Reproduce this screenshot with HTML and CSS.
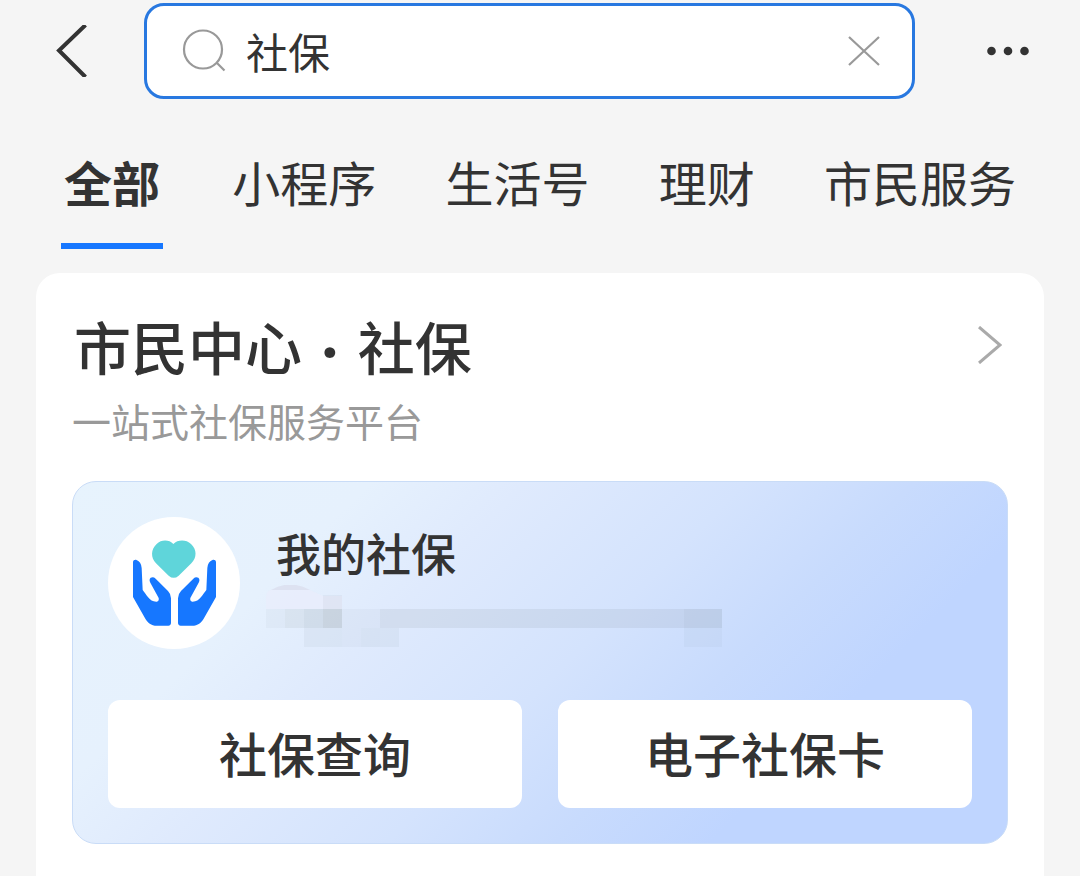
FILE: index.html
```html
<!DOCTYPE html>
<html lang="zh-CN">
<head>
<meta charset="utf-8">
<meta name="viewport" content="width=device-width, initial-scale=1">
<title>社保</title>
<link rel="stylesheet" href="styles.css">
</head>
<body>
<div class="page">
  <header class="topbar">
    <button class="icon-button back" type="button" aria-label="返回">
      <svg width="32" height="52" viewBox="0 0 32 52"><path d="M29.500 0 3 25.500 29.500 52" fill="none" stroke="#333" stroke-width="4"/></svg>
    </button>
    <form class="search" role="search">
      <svg class="search-icon" width="44" height="44" viewBox="0 0 44 44" fill="none" stroke="#999" stroke-width="2.200"><circle cx="21" cy="20.500" r="19"/><path d="M35 34 42.500 41.500"/></svg>
      <input class="search-input" type="text" value="社保" aria-label="搜索">
      <button class="icon-button" type="button" aria-label="清除">
        <svg width="32" height="30" viewBox="0 0 32 30"><path d="M1 1 31 29M31 1 1 29" fill="none" stroke="#999" stroke-width="2.200"/></svg>
      </button>
    </form>
    <button class="icon-button more" type="button" aria-label="更多">
      <svg width="42" height="10" viewBox="0 0 42 10" fill="#333"><circle cx="4.500" cy="5" r="4.300"/><circle cx="21" cy="5" r="4.300"/><circle cx="37.500" cy="5" r="4.300"/></svg>
    </button>
  </header>

  <nav class="tabs">
    <a class="tab tab-active" href="#all" aria-current="page">全部</a>
    <a class="tab" href="#mini">小程序</a>
    <a class="tab" href="#life">生活号</a>
    <a class="tab" href="#money">理财</a>
    <a class="tab" href="#civic">市民服务</a>
  </nav>

  <main class="card">
    <a class="card-head" href="#center">
      <h1 class="title">市民中心 <span class="dot">·</span> 社保</h1>
      <svg width="24" height="38" viewBox="0 0 24 38"><path d="M1 1 22 19 1 37" fill="none" stroke="#aaa" stroke-width="3"/></svg>
    </a>
    <p class="subtitle">一站式社保服务平台</p>

    <section class="panel">
      <div class="profile">
        <svg class="logo" width="132" height="132" viewBox="54 51 396 396">
          <circle cx="252" cy="249" r="198" fill="#fff"/>
          <path fill="#5fd5da" d="M250 132C238 119 214 118 200 132C182 148 182 173 198 190L236 227Q251 240 266 227L304 190C321 173 321 148 303 132C288 118 263 119 250 132Z"/>
          <g fill="#1677ff">
            <path id="hand" d="M129 185Q130 178 138 179Q154 185 155 204L158 270C169 282 178 306 200 305Q208 303 206 294L181 248Q176 239 182 233Q190 229 197 236L234 273Q243 282 243 295V368Q243 376 235 377H204C183 378 174 368 166 356L129 291Z"/>
            <use href="#hand" transform="matrix(-1 0 0 1 507 0)"/>
          </g>
        </svg>
        <div class="profile-text">
          <h2 class="name">我的社保</h2>
          <svg class="mask" width="456" height="62" viewBox="0 0 456 62" aria-hidden="true">
            <path d="M5 5Q24-6 44 5Z" fill="#dde2f1"/>
            <path d="M0 24V14Q0 5 5 5H44L57 11H76V24Z" fill="#e9edfb" opacity=".7"/>
            <g fill="#56645f">
              <path opacity=".05" d="M57 10H76V24H57ZM38 43H76V62H38Z"/>
              <path opacity=".04" d="M0 24H19V43H0ZM76 24H114V43H76ZM76 43H95V62H76Z"/>
              <path opacity=".080" d="M19 24H38V43H19Z"/>
              <path opacity=".060" d="M95 43H114V62H95Z"/>
              <path opacity=".120" d="M38 24H57V43H38Z"/>
              <path opacity=".180" d="M57 24H76V43H57Z"/>
              <path opacity=".050" d="M114 43H133V62H114Z"/>
              <path opacity=".090" d="M114 24H456V43H114Z"/>
              <path opacity=".040" d="M418 24H456V43H418Z"/>
              <path opacity=".040" d="M418 43H456V62H418Z"/>
            </g>
          </svg>
        </div>
      </div>
      <div class="actions">
        <button class="action" type="button">社保查询</button>
        <button class="action" type="button">电子社保卡</button>
      </div>
    </section>
  </main>
</div>
</body>
</html>
```
FILE: styles.css
```css
* {
  box-sizing: border-box;
}

body {
  margin: 0;
  background: #f5f5f5;
  color: #333;
  font-family: "Noto Sans CJK SC", sans-serif;
}

a {
  color: inherit;
  text-decoration: none;
}

svg {
  display: block;
  flex: none;
}

h1,
h2,
p {
  margin: 0;
}

button,
input {
  padding: 0;
  border: 0;
  background: none;
  color: inherit;
  font-family: inherit;
}

.page {
  display: flex;
  flex-direction: column;
  min-height: 100vh;
}

.topbar {
  display: flex;
  align-items: center;
  padding: 3px 51px 0 56px;
}

.back {
  margin-right: 56px;
}

.more {
  margin-left: 72px;
}

.search {
  display: flex;
  flex: 1;
  align-items: center;
  min-width: 0;
  height: 96px;
  padding: 0 32px 0 35px;
  border: 3px solid #2878e0;
  border-radius: 20px;
  background: #fff;
}

.search-input {
  flex: 1;
  min-width: 0;
  margin-left: 20px;
  outline: 0;
  font-size: 42px;
  line-height: 60px;
}

.tabs {
  display: flex;
  justify-content: space-between;
  padding: 47px 64px 0 61px;
}

.tab {
  height: 103px;
  font-size: 48px;
  line-height: 70px;
  white-space: nowrap;
}

.tab-active {
  padding: 0 3px;
  border-bottom: 6px solid #1677ff;
  font-weight: 700;
}

.card {
  flex: 1;
  margin: 24px 36px 0;
  padding: 32px 36px;
  border-radius: 24px;
  border-bottom-left-radius: 0;
  border-bottom-right-radius: 0;
  background: #fff;
}

.card-head {
  display: flex;
  align-items: center;
  justify-content: space-between;
  padding: 0 6px 0 2px;
}

.title {
  font-size: 57px;
  font-weight: 500;
  line-height: 80px;
}

.dot {
  display: inline-block;
  width: 30px;
  font-family: Lato, sans-serif;
  font-weight: 700;
  line-height: 1;
  text-align: center;
}

.subtitle {
  margin-top: 5px;
  color: #999;
  font-size: 39px;
  line-height: 60px;
}

.panel {
  margin-top: 31px;
  padding: 35px;
  border: 1px solid #c9dcf7;
  border-radius: 24px;
  background: linear-gradient(135deg, #e7f3fd 0%, #e6f1fd 23%, #dfeafd 35%, #d4e3fd 52%, #c8dbfd 65%, #bfd5ff 77%, #bfd5ff 100%);
}

.profile {
  display: flex;
}

.profile-text {
  padding: 4px 0 0 26px;
}

.name {
  padding-left: 10px;
  font-size: 45px;
  font-weight: 500;
  line-height: 64px;
}

.actions {
  display: grid;
  grid-template-columns: 1fr 1fr;
  gap: 36px;
  margin-top: 51px;
}

.action {
  height: 108px;
  padding-bottom: 5px;
  border-radius: 12px;
  background: #fff;
  font-size: 48px;
  font-weight: 500;
}
```
